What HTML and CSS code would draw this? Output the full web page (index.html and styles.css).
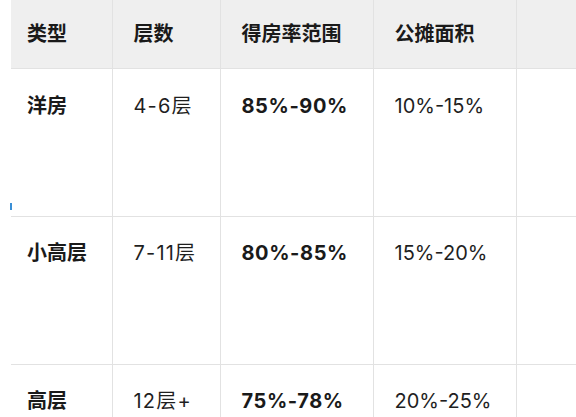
FILE: index.html
```html
<!DOCTYPE html>
<html lang="zh">
<head>
<meta charset="utf-8">
<link rel="stylesheet" href="styles.css">
</head>
<body>
<div class="wrap">
  <table class="grid">
    <colgroup>
      <col class="c1"><col class="c2"><col class="c3"><col class="c4"><col class="c5">
    </colgroup>
    <thead>
      <tr>
        <th>类型</th><th>层数</th><th>得房率范围</th><th>公摊面积</th><th></th>
      </tr>
    </thead>
    <tbody>
      <tr>
        <td class="strong">洋房</td><td class="floors">4-6层</td><td class="strong num">85%-90%</td><td>10%-15%</td><td></td>
      </tr>
      <tr>
        <td class="strong">小高层</td><td class="floors">7-11层</td><td class="strong num">80%-85%</td><td>15%-20%</td><td></td>
      </tr>
      <tr>
        <td class="strong">高层</td><td class="floors">12层+</td><td class="strong num">75%-78%</td><td>20%-25%</td><td></td>
      </tr>
    </tbody>
  </table>
  <span class="tick"></span>
</div>
</body>
</html>
```

FILE: styles.css
```css
html, body {
  margin: 0;
  padding: 0;
  background: #ffffff;
}
.wrap {
  position: relative;
  width: 576px;
  height: 417px;
  overflow: hidden;
  padding-left: 11px;
  box-sizing: border-box;
  font-family: "Inter", "Noto Sans CJK SC", sans-serif;
  color: #1f1f1f;
}
.grid {
  border-collapse: collapse;
  table-layout: fixed;
  width: 705px;
}
.c1 { width: 101px; }
.c2 { width: 108px; }
.c3 { width: 153px; }
.c4 { width: 143px; }
.c5 { width: 200px; }
.grid th,
.grid td {
  border-left: 1px solid #e2e2e2;
  border-bottom: 1px solid #e2e2e2;
  text-align: left;
  font-size: 20px;
  line-height: 28px;
  padding: 0 0 0 21px;
}
.grid th:first-child,
.grid td:first-child {
  border-left: none;
  padding-left: 16px;
}
.grid th {
  background: #efefef;
  height: 68px;
  font-weight: 600;
  vertical-align: middle;
  color: #1a1a1a;
}
.grid td {
  height: 148px;
  vertical-align: top;
  padding-top: 22px;
  box-sizing: border-box;
  font-weight: 400;
}
.grid tbody tr:first-child td {
  padding-top: 23px;
}
.grid td.strong {
  font-weight: 700;
  color: #1a1a1a;
}
.grid td.num {
  letter-spacing: 0.6px;
}
.grid td.floors {
  letter-spacing: 1.2px;
}
.tick {
  position: absolute;
  left: 10px;
  top: 203px;
  width: 2px;
  height: 7px;
  background: #3a8fd6;
}
```
